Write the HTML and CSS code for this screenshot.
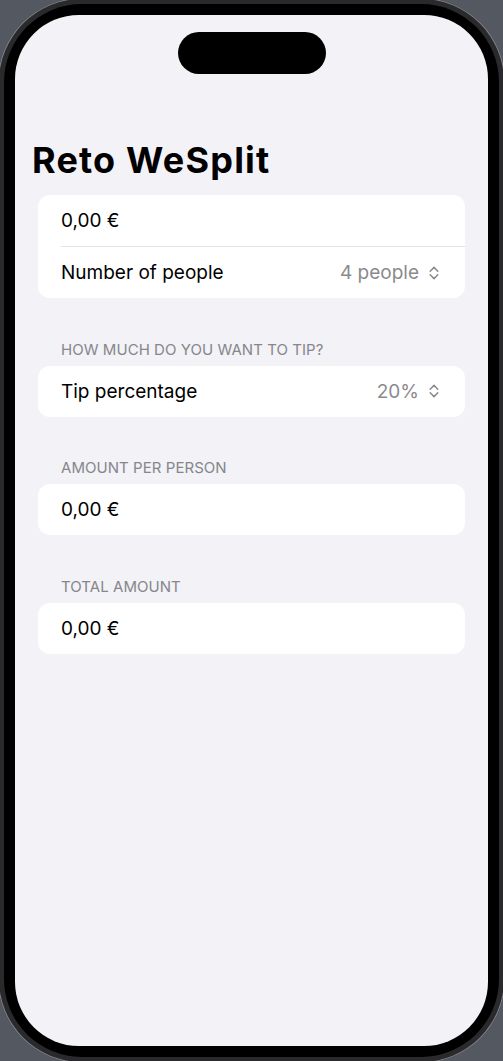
FILE: index.html
```html
<!DOCTYPE html>
<html lang="en">
<head>
<meta charset="utf-8">
<title>Reto WeSplit</title>
<link rel="stylesheet" href="styles.css">
</head>
<body>
<div class="device">
  <div class="bezel">
    <div class="screen">
      <div class="island"></div>
      <h1 class="title">Reto WeSplit</h1>
      <div class="form">
        <section class="section section-first">
          <div class="card">
            <div class="row"><span class="label">0,00 €</span></div>
            <div class="separator"></div>
            <div class="row">
              <span class="label">Number of people</span>
              <span class="picker">
                <span class="value">4 people</span>
                <svg class="chevrons" width="10" height="14" viewBox="0 0 10 14"><path d="M1.2 5.2 L5 1.4 L8.8 5.2 M1.2 8.8 L5 12.6 L8.8 8.8" fill="none" stroke="#8a8a8e" stroke-width="1.5" stroke-linecap="round" stroke-linejoin="round"/></svg>
              </span>
            </div>
          </div>
        </section>
        <section class="section">
          <h2 class="header">HOW MUCH DO YOU WANT TO TIP?</h2>
          <div class="card">
            <div class="row">
              <span class="label">Tip percentage</span>
              <span class="picker">
                <span class="value">20%</span>
                <svg class="chevrons" width="10" height="14" viewBox="0 0 10 14"><path d="M1.2 5.2 L5 1.4 L8.8 5.2 M1.2 8.8 L5 12.6 L8.8 8.8" fill="none" stroke="#8a8a8e" stroke-width="1.5" stroke-linecap="round" stroke-linejoin="round"/></svg>
              </span>
            </div>
          </div>
        </section>
        <section class="section">
          <h2 class="header">AMOUNT PER PERSON</h2>
          <div class="card">
            <div class="row"><span class="label">0,00 €</span></div>
          </div>
        </section>
        <section class="section">
          <h2 class="header">TOTAL AMOUNT</h2>
          <div class="card">
            <div class="row"><span class="label">0,00 €</span></div>
          </div>
        </section>
      </div>
    </div>
  </div>
</div>
</body>
</html>
```

FILE: styles.css
```css
* { box-sizing: border-box; }

html, body {
  margin: 0;
  padding: 0;
}

body {
  width: 503px;
  height: 1061px;
  overflow: hidden;
  background: #545860;
  font-family: Inter, "Liberation Sans", sans-serif;
}

.device {
  width: 507px;
  height: 1065px;
  margin: -2px;
  padding: 6px;
  border-radius: 84px;
  background: #2a2a2c;
  box-shadow: inset 0 0 0 1px #80848a;
}

.bezel {
  height: 100%;
  padding: 11px;
  border-radius: 78px;
  background: #000;
}

.screen {
  height: 100%;
  border-radius: 64px;
  background: #f2f2f7;
  overflow: hidden;
  display: flex;
  flex-direction: column;
}

.island {
  width: 148px;
  height: 42px;
  margin: 17px auto 0;
  border-radius: 21px;
  background: #000;
  flex: none;
}

.title {
  margin: 66px 0 0 17px;
  font-size: 36px;
  line-height: 41px;
  font-weight: 700;
  letter-spacing: 1.2px;
  color: #000;
}

.form {
  margin-top: 14px;
  padding: 0 23px;
  display: flex;
  flex-direction: column;
  gap: 42.5px;
}

.header {
  margin: 0 0 7px 23px;
  font-size: 15px;
  line-height: 18px;
  font-weight: 400;
  color: #86868b;
  letter-spacing: 0.05px;
}

.card {
  background: #fff;
  border-radius: 12px;
  overflow: hidden;
}

.row {
  height: 51px;
  padding: 0 26px 0 23px;
  display: flex;
  align-items: center;
  justify-content: space-between;
  font-size: 19px;
  color: #000;
}

.separator {
  height: 1px;
  margin-left: 23px;
  background: #e3e3e6;
}

.picker {
  display: flex;
  align-items: center;
  gap: 10px;
}

.value {
  color: #8a8a8e;
}

.chevrons {
  display: block;
}
```
